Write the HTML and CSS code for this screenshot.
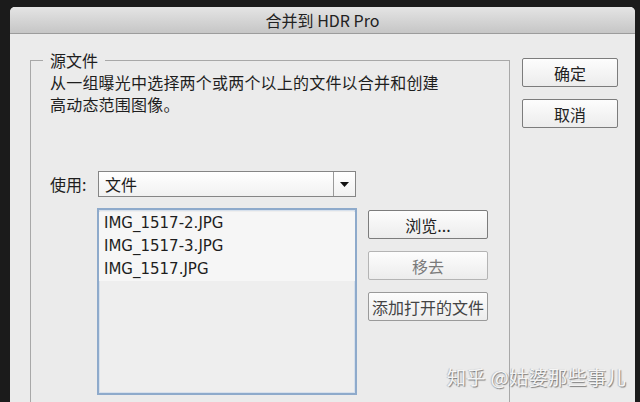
FILE: index.html
```html
<!DOCTYPE html>
<html lang="zh">
  <head>
    <meta charset="UTF-8" />
    <title>合并到 HDR Pro</title>
    <link rel="stylesheet" href="styles.css">
  </head>
  <body>
    <div class="window">
      <div class="titlebar">合并到 HDR Pro</div>
      <div class="dialog-body">
        <fieldset class="group">
          <legend>源文件</legend>
          <p class="desc">从一组曝光中选择两个或两个以上的文件以合并和创建<br>高动态范围图像。</p>
          <div class="use-row">
            <label>使用:</label>
            <div class="select">
              <span class="select-value">文件</span>
              <span class="select-arrow">
                <svg width="9" height="5" viewBox="0 0 9 5"><polygon points="0,0 9,0 4.5,5" fill="#111"/></svg>
              </span>
            </div>
          </div>
          <div class="files-row">
            <ul class="file-list">
              <li>IMG_1517-2.JPG</li>
              <li>IMG_1517-3.JPG</li>
              <li>IMG_1517.JPG</li>
            </ul>
            <div class="file-buttons">
              <button class="btn">浏览...</button>
              <button class="btn btn-disabled">移去</button>
              <button class="btn btn-dim">添加打开的文件</button>
            </div>
          </div>
        </fieldset>
        <div class="actions">
          <button class="btn btn-main">确定</button>
          <button class="btn btn-main">取消</button>
        </div>
      </div>
      <div class="watermark">知乎 @姑婆那些事儿</div>
    </div>
  </body>
</html>
```

FILE: styles.css
```css
body {
  margin: 0;
  background: #1b1b1b;
  font-family: "Noto Sans CJK SC", "DejaVu Sans", sans-serif;
  color: #1e1e1e;
}

ul,
li,
p,
fieldset,
legend {
  margin: 0;
  padding: 0;
}

.window {
  position: relative;
  margin: 7px 5px 0 10px;
  height: 395px;
  background: #ebebeb;
  border-radius: 5px 5px 0 0;
  overflow: hidden;
}

.titlebar {
  height: 26px;
  line-height: 26px;
  text-align: center;
  font-size: 16px;
  color: #222;
  background: linear-gradient(#e4e4e4, #c6c6c6);
  border-bottom: 1px solid #9c9c9c;
}

.dialog-body {
  display: flex;
  padding: 16px 0 0 20px;
}

.group {
  width: 466px;
  border: 1px solid #a8a8a8;
  padding: 0 0 30px 12px;
}

.group legend {
  padding: 0 7px;
  font-size: 16px;
  line-height: 20px;
}

.desc {
  margin: 1px 0 0 7px;
  font-size: 16px;
  line-height: 22px;
  letter-spacing: 0.2px;
}

.use-row {
  display: flex;
  align-items: center;
  margin: 56px 0 0 7px;
}

.use-row label {
  width: 48px;
  font-size: 16px;
}

.select {
  display: flex;
  width: 256px;
  height: 24px;
  border: 1px solid #858585;
  background: linear-gradient(#ffffff, #f1f1f1);
}

.select-value {
  flex: 1;
  padding-left: 6px;
  font-size: 16px;
  line-height: 24px;
}

.select-arrow {
  display: flex;
  align-items: center;
  justify-content: center;
  width: 21px;
  border-left: 1px solid #9a9a9a;
}

.files-row {
  display: flex;
  margin: 11px 0 0 54px;
}

.file-list {
  list-style: none;
  width: 256px;
  height: 181px;
  padding: 2px 0 0 0;
  border: 2px solid #8eaacb;
  box-shadow: inset 0 0 0 1px #d6e0ec;
  background: #eeeeee;
  font-family: "DejaVu Sans", "Noto Sans CJK SC", sans-serif;
  font-size: 15px;
}

.file-list li {
  height: 23px;
  line-height: 23px;
  padding-left: 5px;
  background: #f6f6f6;
}

.file-buttons {
  display: flex;
  flex-direction: column;
  gap: 12px;
  margin: 2px 0 0 11px;
}

.btn {
  width: 120px;
  height: 29px;
  padding: 0;
  border: 1px solid #7c7c7c;
  border-radius: 2px;
  background: linear-gradient(#fdfdfd, #ececec);
  font-family: "Noto Sans CJK SC", sans-serif;
  font-size: 16px;
  color: #222;
}

.btn-disabled {
  border-color: #b4b4b4;
  color: #7a7a7a;
}

.btn-dim {
  border-color: #9a9a9a;
  color: #444;
}

.actions {
  display: flex;
  flex-direction: column;
  gap: 12px;
  margin: 8px 0 0 12px;
}

.btn-main {
  width: 96px;
  height: 29px;
}

.watermark {
  position: absolute;
  left: 437px;
  top: 356px;
  font-size: 19px;
  color: rgba(255, 255, 255, 0.9);
  text-shadow: 1px 1px 1px rgba(0, 0, 0, 0.45), -1px 0 1px rgba(0, 0, 0, 0.2);
  letter-spacing: 0.5px;
}
```
